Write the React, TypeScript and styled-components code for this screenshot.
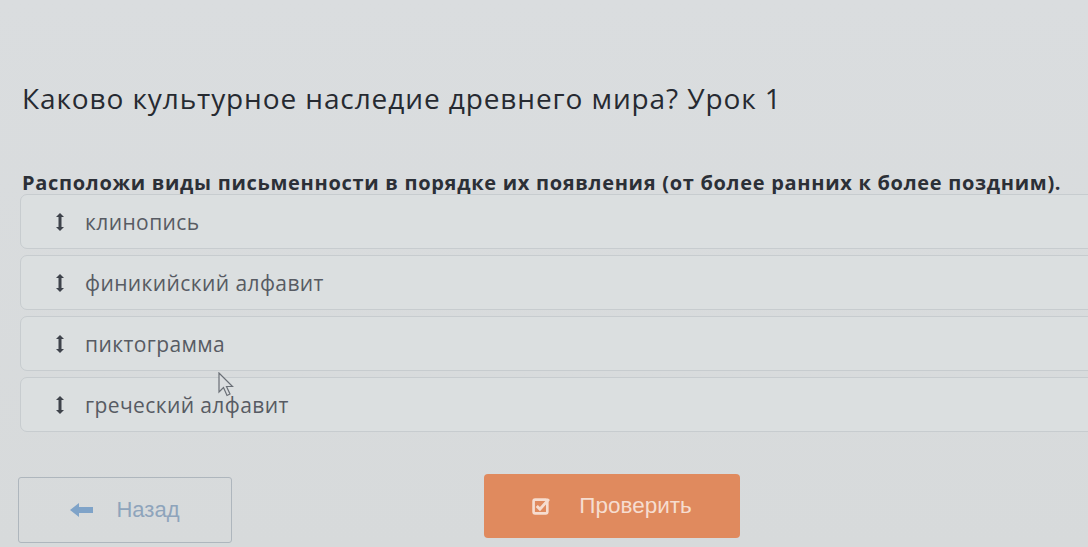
import React from "react";
import styled, { createGlobalStyle } from "styled-components";

const Global = createGlobalStyle`
  html, body {
    margin: 0;
    padding: 0;
    background: #d9dcdd;
    overflow: hidden;
  }
`;

const Page = styled.div`
  position: relative;
  width: 1088px;
  height: 547px;
  overflow: hidden;
  background: linear-gradient(180deg, #dadddf 0%, #d7dadb 100%);
  font-family: "Open Sans", "Noto Sans", sans-serif;
  padding: 78px 0 0 22px;
  box-sizing: border-box;
`;

const Title = styled.h1`
  margin: 0;
  font-size: 28px;
  font-weight: 400;
  color: #262a31;
  letter-spacing: 0.9px;
  line-height: 40px;
`;

const Question = styled.p`
  margin: 54px 0 0 0;
  font-size: 20px;
  font-weight: 700;
  color: #2c3037;
  line-height: 22px;
  letter-spacing: 0.7px;
  white-space: nowrap;
`;

const List = styled.div`
  display: flex;
  flex-direction: column;
  gap: 6px;
  margin: 0 -30px 0 -2px;
`;

const Item = styled.div`
  display: flex;
  align-items: center;
  gap: 20px;
  height: 53px;
  padding-left: 34px;
  border: 1px solid #c7cccf;
  border-radius: 7px;
  background: #dbdfe0;
  font-size: 21px;
  letter-spacing: 0.4px;
  color: #575b63;
`;

const Handle = styled.svg`
  width: 10px;
  height: 20px;
  flex: none;
`;

const Footer = styled.div`
  display: flex;
  align-items: flex-start;
  gap: 252px;
  margin: 42px 0 0 -4px;
`;

const BackButton = styled.div`
  display: flex;
  align-items: center;
  justify-content: center;
  gap: 22px;
  width: 212px;
  height: 64px;
  margin-top: 3px;
  border: 1px solid #aeb6bd;
  border-radius: 3px;
  font-family: "Liberation Sans", Arial, sans-serif;
  font-size: 22px;
  color: #8ea4bb;
`;

const CheckButton = styled.div`
  display: flex;
  align-items: center;
  justify-content: center;
  gap: 28px;
  width: 256px;
  height: 64px;
  border-radius: 4px;
  background: #e08a5e;
  font-family: "Liberation Sans", Arial, sans-serif;
  font-size: 22.5px;
  color: #f6ddd0;
`;

const Cursor = styled.svg`
  position: absolute;
  left: 218px;
  top: 372px;
  width: 18px;
  height: 26px;
`;

const items = [
  "клинопись",
  "финикийский алфавит",
  "пиктограмма",
  "греческий алфавит",
];

const DragIcon = () => (
  <Handle viewBox="0 0 10 20">
    <path d="M5 1 L9 5 H6.5 V15 H9 L5 19 L1 15 H3.5 V5 H1 Z" fill="#3e434b" />
  </Handle>
);

export default function App() {
  return (
    <Page>
      <Global />
      <Title>Каково культурное наследие древнего мира? Урок 1</Title>
      <Question>
        Расположи виды письменности в порядке их появления (от более ранних к
        более поздним).
      </Question>
      <List>
        {items.map((t) => (
          <Item key={t}>
            <DragIcon />
            {t}
          </Item>
        ))}
      </List>
      <Footer>
        <BackButton>
          <svg width="24" height="16" viewBox="0 0 24 16">
            <path d="M0 8 L9 1 V5 H23 V11 H9 V15 Z" fill="#7fa3c8" />
          </svg>
          Назад
        </BackButton>
        <CheckButton>
          <svg width="19" height="19" viewBox="0 0 18 18">
            <rect x="1.5" y="2.5" width="13" height="13" rx="1.5" fill="none" stroke="#f6ddd0" strokeWidth="2.5" />
            <path d="M4.5 8.5 L7.5 11.5 L16 2" fill="none" stroke="#f6ddd0" strokeWidth="2.8" />
          </svg>
          Проверить
        </CheckButton>
      </Footer>
      <Cursor viewBox="0 0 18 26">
        <path d="M1 1 V20 L5.5 15.5 L9 23.5 L12 22 L8.5 14.5 H14.5 Z" fill="#dadddf" stroke="#6a6f76" strokeWidth="1.2" />
      </Cursor>
    </Page>
  );
}
